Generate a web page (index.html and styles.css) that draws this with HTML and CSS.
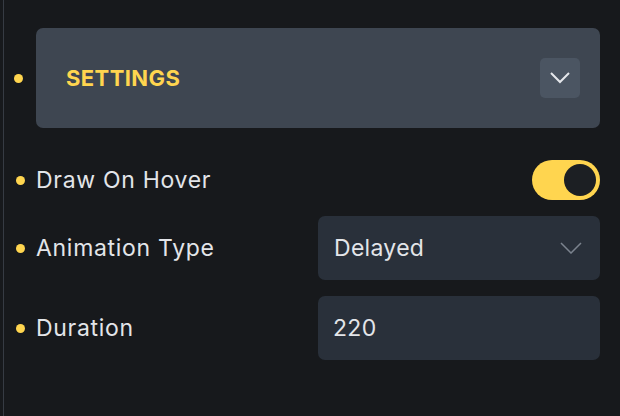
FILE: index.html
```
<html>
    <head>
        <title>Settings panel</title>
        <meta charset="utf-8">
        <link rel="stylesheet" href="styles.css">
    </head>
    <body>
        <div class="panel">
            <div class="row row-head">
                <span class="dot dot-head"></span>
                <div class="card">
                    <div class="card-title">SETTINGS</div>
                    <div class="card-btn">
                        <svg width="20" height="12" viewBox="0 0 20 12"><path d="M1 1 L10 10 L19 1" fill="none" stroke="#e5e7eb" stroke-width="2"/></svg>
                    </div>
                </div>
            </div>

            <div class="row row-toggle">
                <span class="dot"></span>
                <div class="label">Draw On Hover</div>
                <div class="toggle"><span class="knob"></span></div>
            </div>

            <div class="row">
                <span class="dot"></span>
                <div class="label">Animation Type</div>
                <div class="field">
                    <span class="value">Delayed</span>
                    <svg width="22" height="12" viewBox="0 0 22 12"><path d="M1 1 L11 11 L21 1" fill="none" stroke="#7b838e" stroke-width="1.5"/></svg>
                </div>
            </div>

            <div class="row">
                <span class="dot"></span>
                <div class="label">Duration</div>
                <div class="field">
                    <span class="value value-num">220</span>
                </div>
            </div>
        </div>
    </body>
</html>
```

FILE: styles.css
```
body
{
    margin: 0;
    background: #17191c;
    font-family: Inter, "Noto Sans", sans-serif;
    height: 416px;
    overflow: hidden;
}
.panel
{
    margin-left: 3px;
    border-left: 1px solid #363b43;
    height: 416px;
    padding: 28px 20px 0 0;
    box-sizing: border-box;
}
.row
{
    display: flex;
    align-items: center;
    margin-top: 16px;
}
.row-head
{
    margin-top: 0;
}
.row-toggle
{
    margin-top: 32px;
}
.dot
{
    width: 9px;
    height: 9px;
    border-radius: 50%;
    background: #ffd54f;
    margin-left: 12px;
    margin-right: 11px;
    flex: none;
}
.dot-head
{
    margin-left: 10px;
    margin-right: 13px;
}
.card
{
    flex: 1;
    height: 100px;
    background: #3e4651;
    border-radius: 7px;
    display: flex;
    align-items: center;
    padding: 0 20px 0 30px;
}
.card-title
{
    flex: 1;
    color: #ffd54f;
    font-size: 22px;
    font-weight: 700;
    letter-spacing: 0.4px;
}
.card-btn
{
    width: 40px;
    height: 40px;
    border-radius: 5px;
    background: #4b5562;
    display: flex;
    align-items: center;
    justify-content: center;
}
.label
{
    flex: 1;
    color: #e3e5e9;
    font-size: 23px;
    letter-spacing: 0.7px;
}
.toggle
{
    width: 68px;
    height: 40px;
    border-radius: 20px;
    background: #ffd54f;
    display: flex;
    align-items: center;
    justify-content: flex-end;
    padding-right: 4px;
    box-sizing: border-box;
}
.knob
{
    width: 32px;
    height: 32px;
    border-radius: 50%;
    background: #1c1f23;
}
.field
{
    width: 282px;
    height: 64px;
    background: #29303a;
    border-radius: 7px;
    display: flex;
    align-items: center;
    justify-content: space-between;
    padding: 0 18px 0 16px;
    box-sizing: border-box;
}
.value
{
    color: #e3e5e9;
    font-size: 23px;
    letter-spacing: 0.3px;
}
.value-num
{
    margin-left: -1px;
}
```
